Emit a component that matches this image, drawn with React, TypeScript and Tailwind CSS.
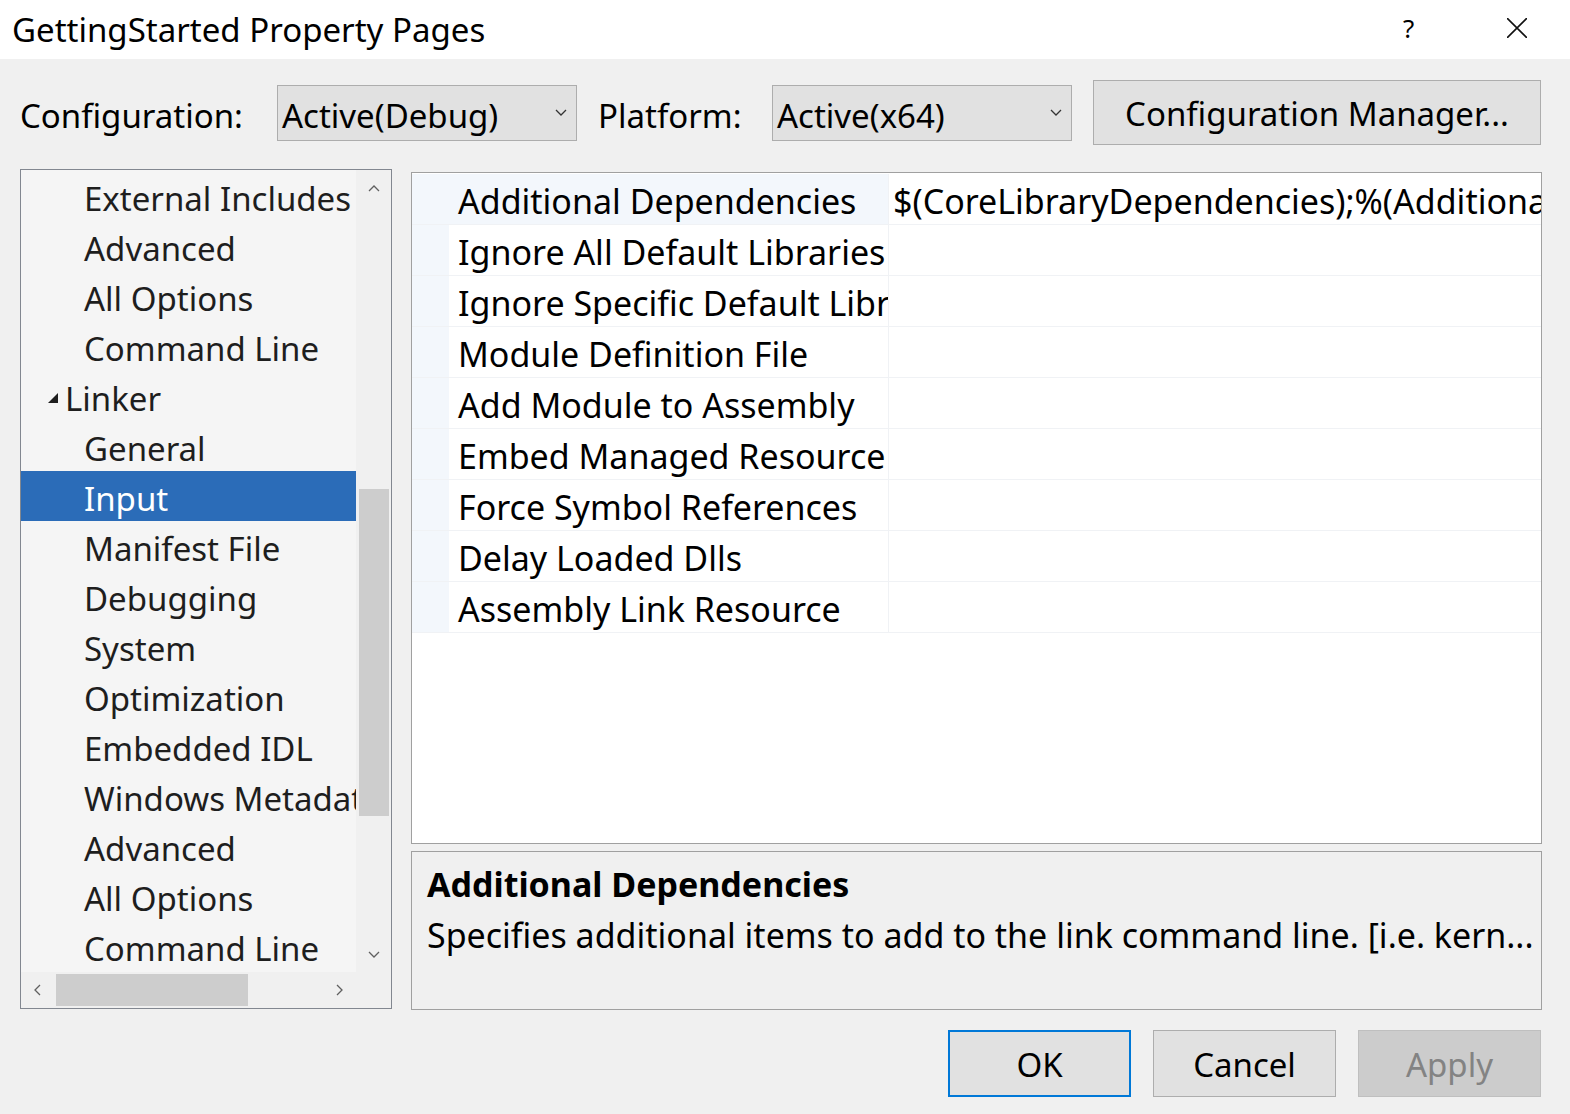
import React from "react"

const FONT = { fontFamily: '"Segoe UI", "Noto Sans", sans-serif' }

const treeItems: { label: string; expander?: boolean; selected?: boolean }[] = [
  { label: "External Includes" },
  { label: "Advanced" },
  { label: "All Options" },
  { label: "Command Line" },
  { label: "Linker", expander: true },
  { label: "General" },
  { label: "Input", selected: true },
  { label: "Manifest File" },
  { label: "Debugging" },
  { label: "System" },
  { label: "Optimization" },
  { label: "Embedded IDL" },
  { label: "Windows Metadata" },
  { label: "Advanced" },
  { label: "All Options" },
  { label: "Command Line" },
]

const props = [
  "Additional Dependencies",
  "Ignore All Default Libraries",
  "Ignore Specific Default Libraries",
  "Module Definition File",
  "Add Module to Assembly",
  "Embed Managed Resource",
  "Force Symbol References",
  "Delay Loaded Dlls",
  "Assembly Link Resource",
]

function Chevron({ dir, className }: { dir: "down" | "up" | "left" | "right"; className?: string }) {
  const d = {
    down: "M1 1 L6 6 L11 1",
    up: "M1 6 L6 1 L11 6",
    left: "M6 1 L1 6 L6 11",
    right: "M1 1 L6 6 L1 11",
  }[dir]
  const vb = dir === "up" || dir === "down" ? "0 0 12 7" : "0 0 7 12"
  return (
    <svg viewBox={vb} className={className} fill="none" stroke="currentColor" strokeWidth="1.3">
      <path d={d} />
    </svg>
  )
}

function Combo({ value }: { value: string }) {
  return (
    <div className="w-[300px] h-[56px] bg-[#e1e1e1] border border-[#adadad] flex items-center pl-[4px] pr-[9px]">
      <span className="flex-1 text-[33px] text-black leading-none pt-[5px]">{value}</span>
      <Chevron dir="down" className="w-[12px] h-[7px] text-[#333]" />
    </div>
  )
}

export default function App() {
  return (
    <div className="w-[1570px] h-[1114px] bg-[#f0f0f0] flex flex-col text-black overflow-hidden" style={FONT}>
      {/* Title bar */}
      <div className="h-[59px] bg-white flex items-center shrink-0">
        <span className="pl-[12px] text-[33px] leading-none flex-1">GettingStarted Property Pages</span>
        <span className="text-[26px] leading-none w-[20px] mr-[84px] pb-[4px]">?</span>
        <svg viewBox="0 0 20 20" className="w-[20px] h-[20px] mr-[43px] mb-[4px]" stroke="#111" strokeWidth="1.6">
          <path d="M0 0 L20 20 M20 0 L0 20" />
        </svg>
      </div>

      {/* Configuration row */}
      <div className="flex items-center h-[65px] mt-[21px] shrink-0">
        <div className="w-[277px] pl-[20px] text-[33px] leading-none pt-[5px]">Configuration:</div>
        <Combo value="Active(Debug)" />
        <div className="w-[195px] pl-[21px] text-[33px] leading-none pt-[5px]">Platform:</div>
        <Combo value="Active(x64)" />
        <button className="ml-[21px] w-[448px] h-[65px] bg-[#e1e1e1] border border-[#adadad] text-[33px] leading-none pt-[2px]">
          Configuration Manager...
        </button>
      </div>

      {/* Main body */}
      <div className="flex mt-[24px] ml-[20px] shrink-0">
        {/* Tree */}
        <div className="w-[372px] h-[840px] border border-[#828790] bg-[#f0f0f0] grid grid-cols-[335px_35px] grid-rows-[802px_36px]">
          <div className="bg-[#f5f5f5] overflow-hidden pt-[1px]">
            {treeItems.map((it, i) => (
              <div
                key={i}
                className={
                  "h-[50px] flex items-center whitespace-nowrap text-[33px] leading-none pt-[4px] " +
                  (it.selected ? "bg-[#2b6cb8] text-white" : "text-[#1e1e1e]")
                }
              >
                {it.expander ? (
                  <>
                    <span className="ml-[27px] mr-[7px] w-0 h-0 border-l-[10px] border-l-transparent border-b-[10px] border-b-[#1e1e1e]" />
                    <span>{it.label}</span>
                  </>
                ) : (
                  <span className="ml-[63px]">{it.label}</span>
                )}
              </div>
            ))}
          </div>
          <div className="flex flex-col items-center">
            <Chevron dir="up" className="w-[12px] h-[7px] mt-[15px] text-[#606060]" />
            <div className="w-[30px] h-[327px] bg-[#cdcdcd] mt-[297px]" />
            <div className="flex-1" />
            <Chevron dir="down" className="w-[12px] h-[7px] mb-[14px] text-[#606060]" />
          </div>
          <div className="flex items-center">
            <Chevron dir="left" className="w-[7px] h-[12px] ml-[13px] text-[#606060]" />
            <div className="w-[192px] h-[32px] bg-[#cdcdcd] ml-[15px]" />
            <div className="flex-1" />
            <Chevron dir="right" className="w-[7px] h-[12px] mr-[13px] text-[#606060]" />
          </div>
          <div />
        </div>

        {/* Right column */}
        <div className="ml-[19px] w-[1131px] pt-[3px] flex flex-col">
          <div className="h-[672px] border border-[#a0a0a0] bg-white overflow-hidden pt-[1px]">
            {props.map((p, i) => (
              <div key={i} className="h-[51px] flex border-b border-[#f0f2f5]">
                <div
                  className={
                    "w-[477px] flex items-center pl-[46px] border-r border-[#f0f2f5] overflow-hidden whitespace-nowrap text-[34px] leading-none pt-[4px] " +
                    (i === 0 ? "bg-[#f3f7fc]" : "bg-white")
                  }
                  style={i === 0 ? undefined : { boxShadow: "inset 37px 0 0 #f3f7fc" }}
                >
                  {p}
                </div>
                <div className="flex-1 flex items-center pl-[4px] overflow-hidden whitespace-nowrap text-[34px] leading-none pt-[4px]">
                  {i === 0 ? "$(CoreLibraryDependencies);%(AdditionalDependencies)" : ""}
                </div>
              </div>
            ))}
          </div>
          <div className="h-[159px] mt-[7px] border border-[#a0a0a0] bg-[#f0f0f0] pl-[15px] pt-[12px]">
            <div className="text-[34px] font-bold leading-none h-[40px] flex items-center">Additional Dependencies</div>
            <div className="text-[34px] leading-none h-[62px] flex items-center whitespace-nowrap">
              Specifies additional items to add to the link command line. [i.e. kern...
            </div>
          </div>
        </div>
      </div>

      {/* Buttons */}
      <div className="flex justify-end mt-[20px] mr-[29px] gap-[22px] shrink-0">
        <button className="w-[183px] h-[67px] bg-[#e1e1e1] border-2 border-[#0078d7] text-[33px] leading-none pt-[2px]">OK</button>
        <button className="w-[183px] h-[67px] bg-[#e1e1e1] border border-[#adadad] text-[33px] leading-none pt-[2px]">Cancel</button>
        <button className="w-[183px] h-[67px] bg-[#cccccc] border border-[#bfbfbf] text-[#838383] text-[33px] leading-none pt-[2px]">Apply</button>
      </div>
    </div>
  )
}
